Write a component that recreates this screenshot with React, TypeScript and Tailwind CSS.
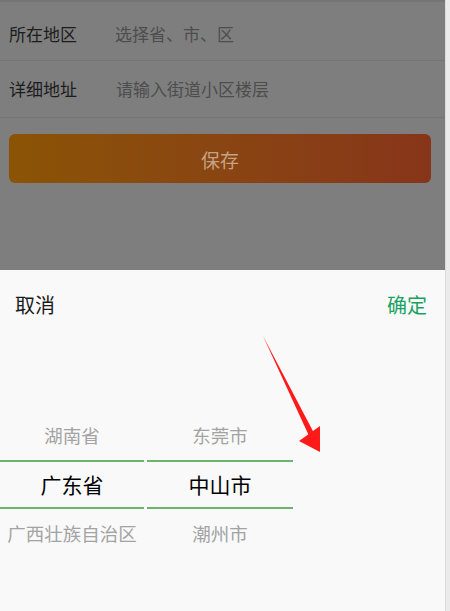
import React from 'react';

const font = { fontFamily: '"Noto Sans CJK SC", "Noto Sans", sans-serif' };

function Column({ items, width }: { items: [string, string, string]; width: string }) {
  return (
    <div className={`flex flex-col ${width}`}>
      <div className="h-[49px] flex items-center justify-center text-[18.5px] text-[#a3a3a3]">{items[0]}</div>
      <div className="h-[49px] flex items-center justify-center text-[21px] text-black border-y-2 border-[#6db56d]">
        {items[1]}
      </div>
      <div className="h-[49px] flex items-center justify-center text-[18.5px] text-[#a3a3a3]">{items[2]}</div>
    </div>
  );
}

export default function App() {
  return (
    <div className="w-[450px] h-[611px] flex overflow-hidden" style={font}>
      <div className="w-[445px] flex flex-col relative">
        {/* dimmed form behind the sheet */}
        <div className="h-[270px] bg-[#7e7e7e] flex flex-col">
          <div className="h-[61px] border-t-2 border-b border-[#757575] flex items-center pt-[5px] px-[9px] text-[17px]">
            <span className="w-[106px] text-[#1c1c1c]">所在地区</span>
            <span className="text-[#4d4d4d]">选择省、市、区</span>
          </div>
          <div className="h-[57px] border-b border-[#757575] flex items-center px-[9px] text-[17px]">
            <span className="w-[107px] text-[#1c1c1c]">详细地址</span>
            <span className="text-[#4d4d4d]">请输入街道小区楼层</span>
          </div>
          <div className="px-[9px] pt-[16px] pr-[14px]">
            <button className="w-full h-[49px] rounded-md bg-gradient-to-r from-[#8b5404] to-[#873519] text-[19px] text-[#c4a285] pt-[3px]">
              保存
            </button>
          </div>
        </div>

        {/* picker sheet */}
        <div className="flex-1 bg-[#f9f9f9] flex flex-col">
          <div className="h-[70px] flex items-center justify-between px-[15px] pr-[18px] text-[20px]">
            <span className="text-[#1a1a1a]">取消</span>
            <span className="text-[#1aa260]">确定</span>
          </div>
          <div className="flex gap-[3px] mt-[71px]">
            <Column items={['湖南省', '广东省', '广西壮族自治区']} width="w-[144px]" />
            <Column items={['东莞市', '中山市', '潮州市']} width="w-[146px]" />
          </div>
        </div>

        {/* red annotation arrow */}
        <svg className="absolute left-[255px] top-[330px] pointer-events-none" width="80" height="130" viewBox="0 0 80 130">
          <path d="M8 6 L55 108 L60 105 Z" fill="#ff1a1a" />
          <path d="M44 111 L65 122 L65 96 Z" fill="#ff1a1a" />
        </svg>
      </div>
      <div className="w-[5px] bg-[#ebebeb] border-l border-[#dcdcdc]" />
    </div>
  );
}
